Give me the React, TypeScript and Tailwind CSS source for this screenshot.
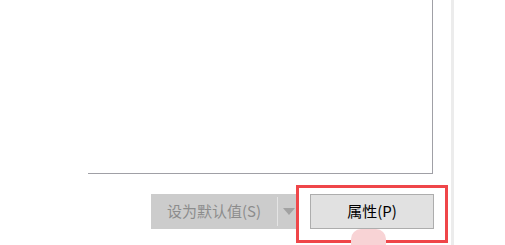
import React from 'react';

const font = { fontFamily: '"Noto Sans CJK SC", "Noto Sans", sans-serif' };

function SplitButton() {
  return (
    <div className="flex h-[35px] w-[146px] items-stretch bg-[#cccccc]">
      <div className="flex w-[126px] items-center justify-center text-[15px] text-[#8c8c8c]">
        设为默认值(S)
      </div>
      <div className="my-[3px] w-px bg-[#e4e4e4]" />
      <div className="flex flex-1 items-center justify-center pl-[2px]">
        <svg width="12" height="7" viewBox="0 0 12 7">
          <path d="M0 0 L12 0 L6 7 Z" fill="#a2a2a2" />
        </svg>
      </div>
    </div>
  );
}

export default function App() {
  return (
    <div className="relative h-[245px] w-[505px] overflow-hidden bg-white" style={font}>
      <div className="h-full w-[454px] border-r-[3px] border-[#ececec]">
        {/* list panel */}
        <div className="ml-[88px] h-[174px] w-[345px] border-r border-b border-[#a0a0a6] bg-white" />

        {/* buttons */}
        <div className="mt-[20px] flex items-start gap-[13px] pl-[151px]">
          <SplitButton />
          <button className="flex h-[35px] w-[124px] items-center justify-center border border-[#adadad] bg-[#e1e1e1] text-[15px] text-black">
            属性(P)
          </button>
        </div>
      </div>

      {/* annotation highlight */}
      <div className="absolute left-[296px] top-[185px] h-[58px] w-[152px] border-[3px] border-[#ef4649]" />
      <div className="absolute left-[351px] top-[229px] h-[24px] w-[35px] rounded-t-[10px] bg-[#f8d3d5]" />
    </div>
  );
}
